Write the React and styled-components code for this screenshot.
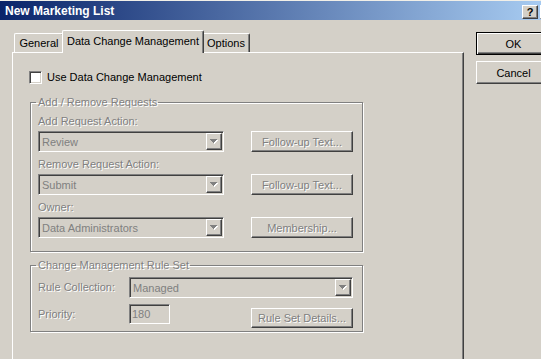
import React from 'react';
import styled, { createGlobalStyle, css } from 'styled-components';

const GlobalStyle = createGlobalStyle`
  html, body {
    margin: 0;
    padding: 0;
    background: #d4d0c8;
    overflow: hidden;
  }
  body {
    font-family: "Liberation Sans", Arial, sans-serif;
    font-size: 11px;
    color: #000;
  }
`;

const raised = css`
  box-sizing: border-box;
  background: #d4d0c8;
  border: 1px solid;
  border-color: #fff #404040 #404040 #fff;
  box-shadow: inset -1px -1px 0 #808080;
`;

const sunken = css`
  box-sizing: border-box;
  border: 1px solid;
  border-color: #808080 #fff #fff #808080;
  box-shadow: inset 1px 1px 0 #404040, inset -1px -1px 0 #d4d0c8;
`;

const greyed = css`
  color: #808080;
  text-shadow: 1px 1px 0 #fff;
`;

const Window = styled.div`
  width: 560px;
  height: 359px;
  box-sizing: border-box;
  overflow: hidden;
  background: #d4d0c8;
  border-top: 1px solid #f1efe8;
  display: flex;
  flex-direction: column;
`;

const TitleBar = styled.div`
  height: 19px;
  flex-shrink: 0;
  display: flex;
  align-items: flex-start;
  padding: 0 4px 0 5px;
  background: linear-gradient(to right, #0a246a, #a6caf0 96%);
`;

const Title = styled.div`
  color: #fff;
  font-weight: bold;
  font-size: 12px;
  line-height: 21px;
  white-space: nowrap;
`;

const CaptionButton = styled.div`
  ${raised};
  width: 16px;
  height: 14px;
  margin-top: 4px;
  margin-left: ${p => (p.$first ? 'auto' : '2px')};
  font-weight: bold;
  font-size: 11px;
  line-height: 12px;
  text-align: center;
`;

const Body = styled.div`
  display: flex;
  align-items: flex-start;
  gap: 12px;
  padding: 10px 0 0 12px;
`;

const TabArea = styled.div`
  width: 452px;
  flex-shrink: 0;
`;

const TabStrip = styled.div`
  height: 22px;
  display: flex;
  align-items: flex-end;
  padding-left: 2px;
`;

const Tab = styled.div`
  position: relative;
  z-index: ${p => (p.$active ? 2 : 1)};
  box-sizing: border-box;
  width: ${p => p.$w}px;
  height: ${p => (p.$active ? 23 : 19)}px;
  margin: ${p => (p.$active ? '0 -2px -1px' : '0')};
  padding-top: ${p => (p.$active ? 4 : 3)}px;
  background: #d4d0c8;
  border-top: 1px solid #fff;
  border-left: 1px solid #fff;
  border-right: 1px solid #404040;
  box-shadow: inset -1px 0 0 #808080;
  border-radius: 2px 2px 0 0;
  text-align: center;
  line-height: 13px;
  white-space: nowrap;
`;

const Panel = styled.div`
  box-sizing: border-box;
  height: 320px;
  background: #d4d0c8;
  border-top: 1px solid #fff;
  border-left: 1px solid #fff;
  border-right: 1px solid #404040;
  box-shadow: inset -1px 0 0 #808080;
  padding: 18px 0 0 17px;
`;

const CheckRow = styled.label`
  display: flex;
  align-items: center;
  gap: 5px;
  height: 13px;
  line-height: 13px;
  margin-left: -1px;
`;

const CheckBox = styled.span`
  ${sunken};
  width: 13px;
  height: 13px;
  background: #fff;
`;

const Group = styled.fieldset`
  box-sizing: border-box;
  width: 333px;
  min-width: 0;
  margin: ${p => p.$mt}px 0 0;
  padding: ${p => p.$pt}px 9px ${p => p.$pb}px 7px;
  border: 1px solid #808080;
  box-shadow: 1px 1px 0 #fff, inset 1px 1px 0 #fff;
`;

const Legend = styled.legend`
  ${greyed};
  padding: 0 1px 0 2px;
  margin-left: -2px;
  line-height: 13px;
`;

const Stack = styled.div`
  display: flex;
  flex-direction: column;
  gap: 6px;
`;

const Field = styled.div`
  display: flex;
  flex-direction: column;
  gap: 3px;
`;

const FieldRow = styled.div`
  display: flex;
  gap: 27px;
`;

const Caption = styled.div`
  ${greyed};
  width: ${p => (p.$w ? `${p.$w}px` : 'auto')};
  flex-shrink: 0;
  line-height: ${p => p.$lh || 13}px;
  white-space: nowrap;
`;

const ComboBox = styled.div`
  ${sunken};
  width: ${p => p.$w}px;
  height: 21px;
  flex-shrink: 0;
  display: flex;
  align-items: center;
  justify-content: space-between;
  padding: 1px 1px 1px 3px;
  background: #d4d0c8;
  color: #808080;
`;

const DropButton = styled.div`
  ${raised};
  width: 16px;
  height: 17px;
  display: flex;
  align-items: center;
  justify-content: center;
`;

const TextBox = styled.div`
  ${sunken};
  width: ${p => p.$w}px;
  height: 20px;
  flex-shrink: 0;
  padding: 2px 0 0 2px;
  line-height: 14px;
  background: #d4d0c8;
  color: #808080;
`;

const PushButton = styled.div`
  ${raised};
  width: ${p => p.$w}px;
  height: ${p => p.$h || 21}px;
  flex-shrink: 0;
  display: flex;
  align-items: center;
  justify-content: center;
  white-space: nowrap;
  margin-top: ${p => p.$mt || 0}px;
  margin-left: ${p => (p.$push ? 'auto' : '0')};
  ${p => p.$disabled && greyed};
  ${p =>
    p.$default &&
    css`
      border: 1px solid #000;
      box-shadow: inset 1px 1px 0 #fff, inset -1px -1px 0 #404040, inset -2px -2px 0 #808080;
    `};
`;

const RuleRow = styled.div`
  display: flex;
  align-items: ${p => (p.$top ? 'flex-start' : 'center')};
`;

const DialogButtons = styled.div`
  display: flex;
  flex-direction: column;
  gap: 6px;
  margin-top: 2px;
`;

const Arrow = () => (
  <svg width="8" height="5" viewBox="0 0 8 5">
    <path d="M1 1h7v1H1z M2 2h5v1H2z M3 3h3v1H3z M4 4h1v1H4z" fill="#fff" />
    <path d="M0 0h7v1H0z M1 1h5v1H1z M2 2h3v1H2z M3 3h1v1H3z" fill="#808080" />
  </svg>
);

const Combo = ({ w, value }) => (
  <ComboBox $w={w}>
    <span>{value}</span>
    <DropButton>
      <Arrow />
    </DropButton>
  </ComboBox>
);

const requestFields = [
  { label: 'Add Request Action:', value: 'Review', button: 'Follow-up Text...' },
  { label: 'Remove Request Action:', value: 'Submit', button: 'Follow-up Text...' },
  { label: 'Owner:', value: 'Data Administrators', button: 'Membership...' },
];

const App = () => {
  return (
    <Window>
      <GlobalStyle />
      <TitleBar>
        <Title>New Marketing List</Title>
        <CaptionButton $first>?</CaptionButton>
        <CaptionButton />
      </TitleBar>
      <Body>
        <TabArea>
          <TabStrip>
            <Tab $w={50}>General</Tab>
            <Tab $w={142} $active>Data Change Management</Tab>
            <Tab $w={48}>Options</Tab>
          </TabStrip>
          <Panel>
            <CheckRow>
              <CheckBox />
              <span>Use Data Change Management</span>
            </CheckRow>

            <Group $mt={12} $pt={6} $pb={13}>
              <Legend>Add / Remove Requests</Legend>
              <Stack>
                {requestFields.map(f => (
                  <Field key={f.label}>
                    <Caption>{f.label}</Caption>
                    <FieldRow>
                      <Combo w={186} value={f.value} />
                      <PushButton $w={102} $disabled>{f.button}</PushButton>
                    </FieldRow>
                  </Field>
                ))}
              </Stack>
            </Group>

            <Group $mt={7} $pt={5} $pb={3}>
              <Legend>Change Management Rule Set</Legend>
              <Stack>
                <RuleRow>
                  <Caption $w={91}>Rule Collection:</Caption>
                  <Combo w={224} value="Managed" />
                </RuleRow>
                <RuleRow $top>
                  <Caption $w={91} $lh={20}>Priority:</Caption>
                  <TextBox $w={41}>180</TextBox>
                  <PushButton $w={102} $h={20} $mt={4} $push $disabled>
                    Rule Set Details...
                  </PushButton>
                </RuleRow>
              </Stack>
            </Group>
          </Panel>
        </TabArea>
        <DialogButtons>
          <PushButton $w={75} $h={23} $default>OK</PushButton>
          <PushButton $w={75} $h={23}>Cancel</PushButton>
        </DialogButtons>
      </Body>
    </Window>
  );
};

export default App;
